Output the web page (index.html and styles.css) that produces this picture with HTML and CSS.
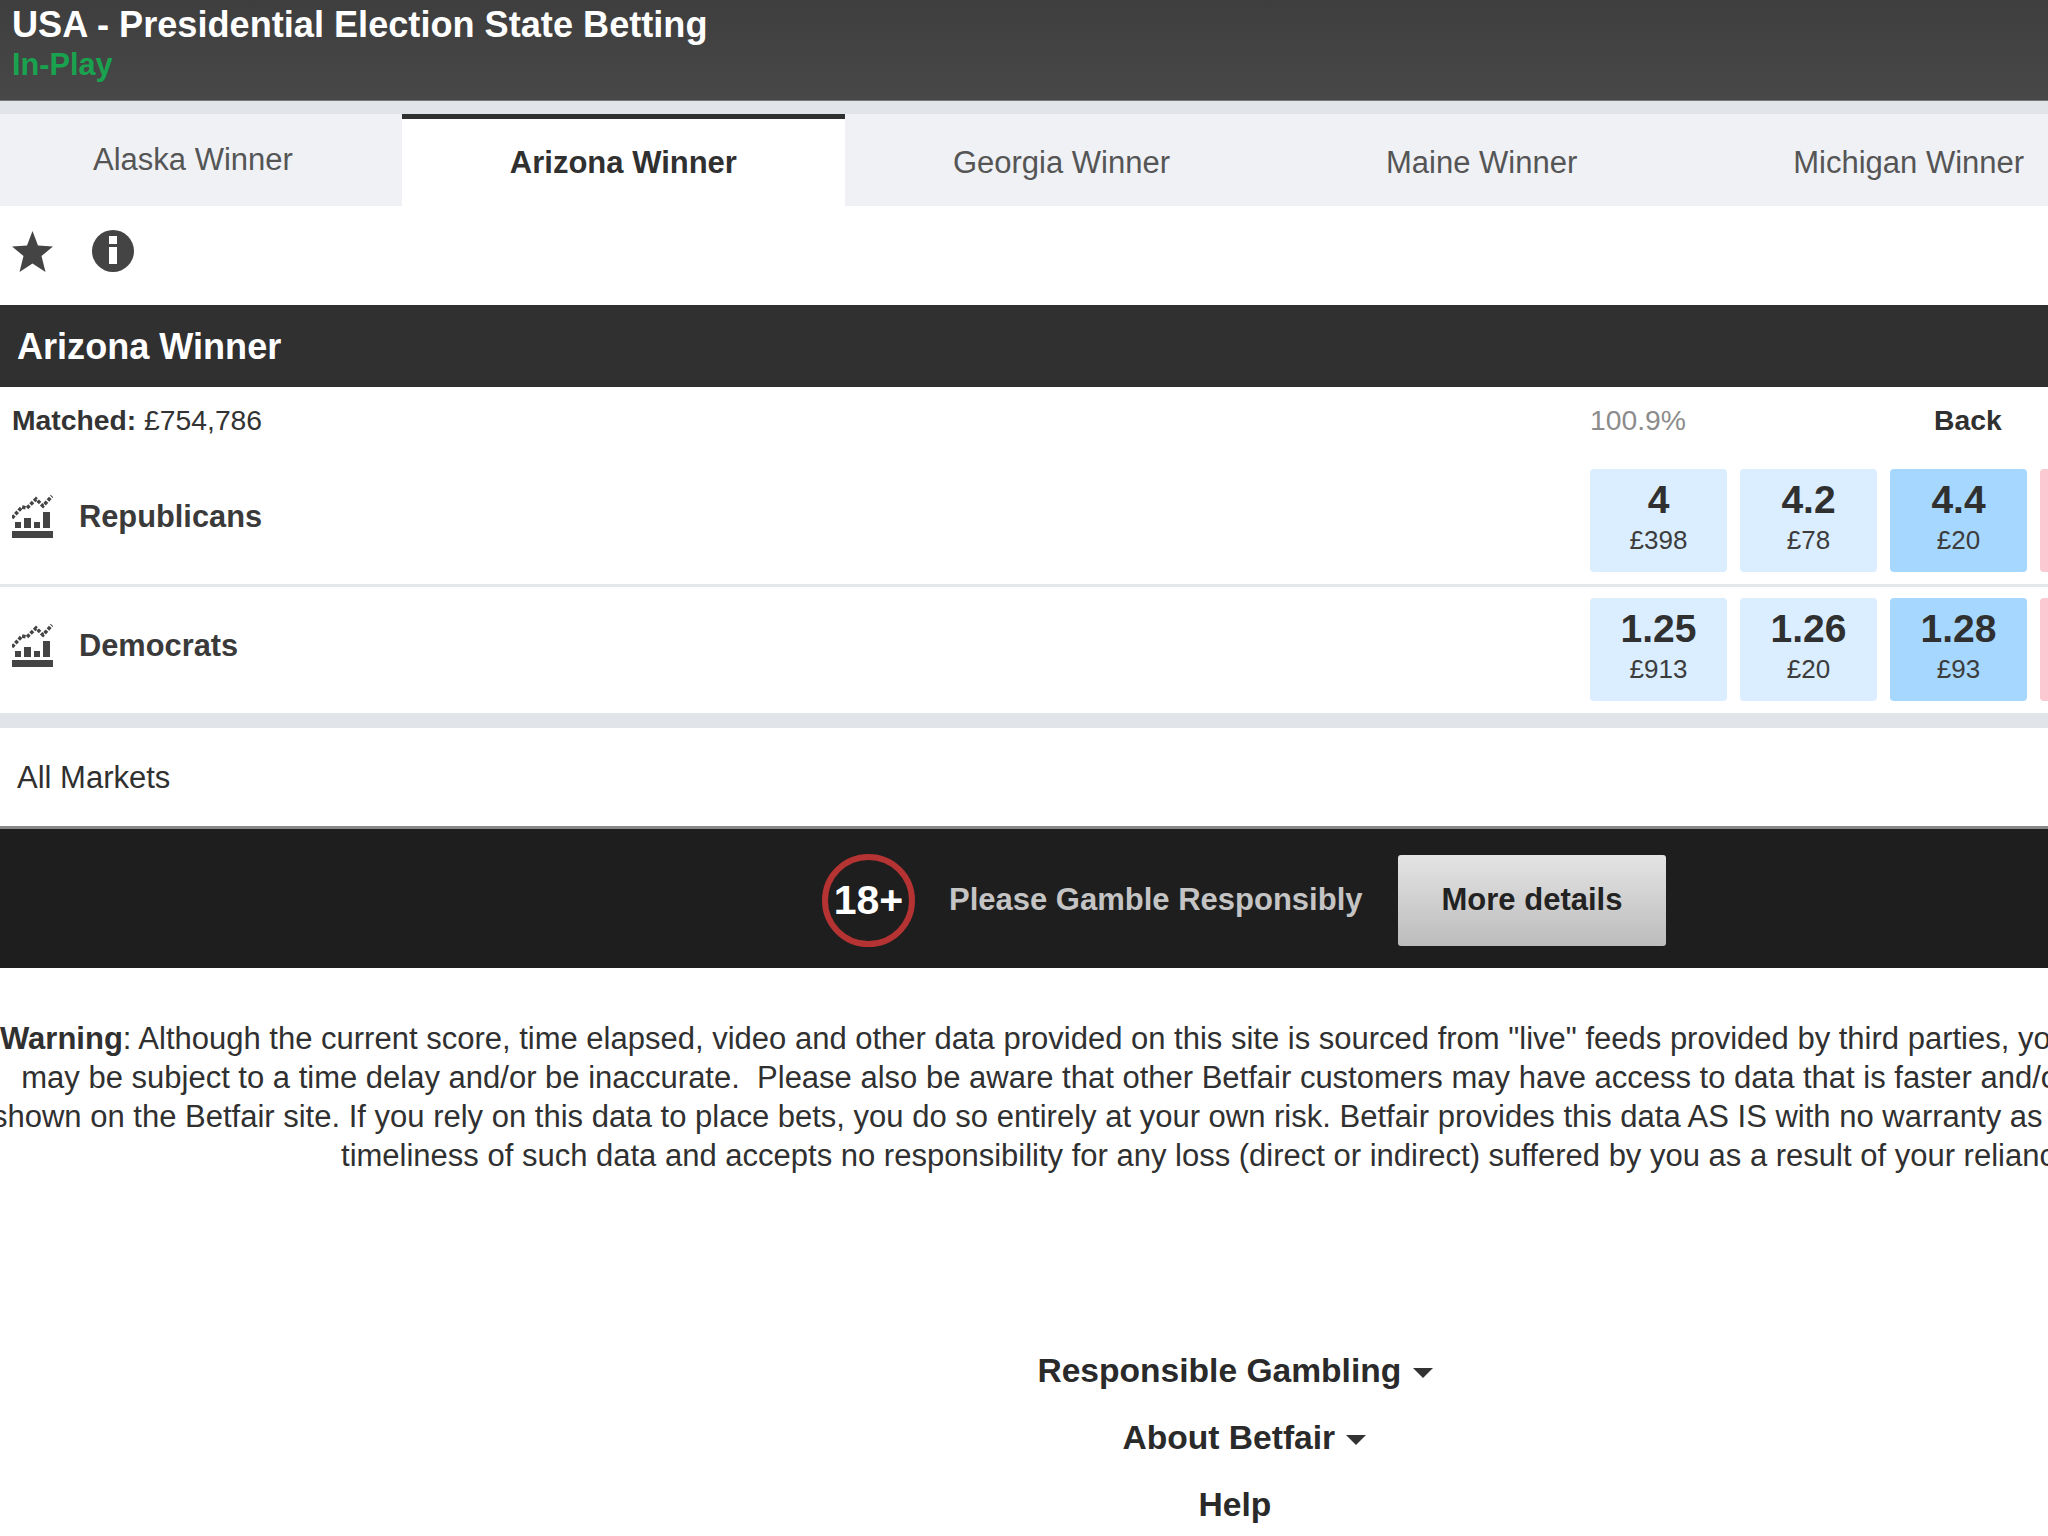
FILE: index.html
```html
<!DOCTYPE html>
<html lang="en">
<head>
<meta charset="utf-8">
<title>Arizona Winner</title>
<link rel="stylesheet" href="styles.css">
</head>
<body>
<div class="page">
  <header class="event-head">
    <div class="event-title">USA - Presidential Election State Betting</div>
    <div class="event-status">In-Play</div>
  </header>
  <nav class="tabs">
    <a class="tab tab-first">Alaska Winner</a>
    <a class="tab tab-active">Arizona Winner</a>
    <a class="tab">Georgia Winner</a>
    <a class="tab">Maine Winner</a>
    <a class="tab">Michigan Winner</a>
  </nav>
  <div class="tools">
    <svg class="icon-star" viewBox="0 0 41 41"><path d="M20.500 0L26 14.500l15 1L29.500 25l4 16-13-8.500-13 8.500 4-16L0 15.500l15-1z"/></svg>
    <svg class="icon-info" viewBox="0 0 42 42"><circle cx="21" cy="21" r="21"/><rect x="17" y="6" width="8" height="8" fill="#fff"/><rect x="17" y="17" width="8" height="17" fill="#fff"/></svg>
  </div>
  <h2 class="market-bar">Arizona Winner</h2>
  <div class="market-info">
    <div class="matched"><b>Matched:</b> £754,786</div>
    <div class="percent">100.9%</div>
    <div class="back-label">Back</div>
  </div>
  <div class="runner runner-line">
    <div class="runner-name">
      <svg class="icon-chart" viewBox="0 0 41 43"><path class="dots" d="M0 23L10 12l5 1 9-9 7 7 9-10"/><path d="M3 27h6v6H3zM12 23h7v10h-7zM22 27h6v6h-6zM31 17h7v16h-7zM0 36h41v7H0z"/></svg>
      <span>Republicans</span>
    </div>
    <div class="prices">
      <div class="price"><b>4</b><span>£398</span></div>
      <div class="price"><b>4.2</b><span>£78</span></div>
      <div class="price price-best"><b>4.4</b><span>£20</span></div>
      <div class="price price-lay"></div>
    </div>
  </div>
  <div class="runner">
    <div class="runner-name">
      <svg class="icon-chart" viewBox="0 0 41 43"><path class="dots" d="M0 23L10 12l5 1 9-9 7 7 9-10"/><path d="M3 27h6v6H3zM12 23h7v10h-7zM22 27h6v6h-6zM31 17h7v16h-7zM0 36h41v7H0z"/></svg>
      <span>Democrats</span>
    </div>
    <div class="prices">
      <div class="price"><b>1.25</b><span>£913</span></div>
      <div class="price"><b>1.26</b><span>£20</span></div>
      <div class="price price-best"><b>1.28</b><span>£93</span></div>
      <div class="price price-lay"></div>
    </div>
  </div>
  <div class="all-markets">All Markets</div>
  <div class="gamble">
    <div class="age">18+</div>
    <div class="gamble-text">Please Gamble Responsibly</div>
    <a class="gamble-btn">More details</a>
  </div>
  <div class="warning">
    <p class="warn-line warn-a"><b>Warning</b>: Although the current score, time elapsed, video and other data provided on this site is sourced from "live" feeds provided by third parties, you should be aware that this data</p>
    <p class="warn-line warn-b">may be subject to a time delay and/or be inaccurate.&nbsp; Please also be aware that other Betfair customers may have access to data that is faster and/or more accurate than the data</p>
    <p class="warn-line warn-c">shown on the Betfair site. If you rely on this data to place bets, you do so entirely at your own risk. Betfair provides this data AS IS with no warranty as to the accuracy, completeness or</p>
    <p class="warn-line warn-d">timeliness of such data and accepts no responsibility for any loss (direct or indirect) suffered by you as a result of your reliance on it.</p>
  </div>
  <ul class="footer-links">
    <li>Responsible Gambling <i class="caret"></i></li>
    <li class="footer-about">About Betfair <i class="caret"></i></li>
    <li>Help</li>
  </ul>
</div>
</body>
</html>
```
FILE: styles.css
```css
html, body { margin: 0; padding: 0; width: 2048px; height: 1536px; overflow: hidden; background: #fff; }
body { font-family: "Liberation Sans", Arial, sans-serif; color: #303030; }
.page { width: 2468px; height: 1536px; overflow: hidden; }
.event-head { height: 101px; box-sizing: border-box; background: linear-gradient(#3e3e3e, #484848); border-bottom: 1px solid #777; padding: 4px 0 0 12px; }
.event-title { font-size: 36.150px; line-height: 42px; font-weight: 700; color: #fff; }
.event-status { font-size: 30.700px; line-height: 38px; font-weight: 700; color: #1aa34f; }
.tabs { display: flex; border-top: 13px solid #e1e5e9; height: 92px; background: #eff1f5; }
.tab { padding: 3px 108px 0; font-size: 31px; line-height: 92px; color: #555; white-space: nowrap; }
.tab-first { padding: 0 109px 0 93px; line-height: 91px; }
.tab-active { background: #fff; border-top: 5px solid #303030; padding-top: 0; font-weight: 700; color: #303030; line-height: 87px; }
.tools { height: 99px; display: flex; align-items: center; padding: 0 0 9px 12px; gap: 39px; box-sizing: border-box; }
.tools svg { fill: #444; display: block; }
.icon-star { width: 41px; height: 41px; }
.icon-info { width: 42px; height: 42px; }
.market-bar { margin: 0; height: 82px; background: #303030; color: #fff; font-size: 36.100px; line-height: 84px; padding-left: 17px; font-weight: 700; }
.market-info { display: flex; height: 82px; font-size: 28.3px; line-height: 66px; }
.matched { width: 1590px; padding-left: 12px; box-sizing: border-box; color: #333; }
.percent { width: 344px; color: #8c8c8c; }
.back-label { font-weight: 700; }
.runner { display: flex; height: 115px; box-sizing: border-box; }
.runner-line { height: 118px; margin-bottom: 11px; border-bottom: 3px solid #e3e8ec; }
.runner-name { width: 1590px; display: flex; align-items: center; height: 94px; padding-left: 12px; box-sizing: border-box; font-size: 30.8px; font-weight: 700; color: #3a3a3a; gap: 26px; }
.runner-name span { padding-top: 2px; }
.icon-chart { width: 41px; height: 43px; fill: #444; flex: none; }
.dots { fill: none; stroke: #444; stroke-width: 3.500; stroke-dasharray: 3.500 1.500; }
.prices { display: flex; gap: 13px; }
.price { width: 137px; height: 103px; border-radius: 4px; background: #dbeeff; display: flex; flex-direction: column; align-items: center; text-align: center; }
.price b { font-size: 39px; line-height: 40px; margin-top: 11px; color: #303030; }
.price span { font-size: 26px; line-height: 32px; margin-top: 4px; color: #3c3c3c; }
.price-best { background: #a6d8ff; }
.price-lay { background: #fac9d1; }
.all-markets { border-top: 15px solid #e1e5e9; height: 98px; line-height: 100px; font-size: 31px; padding-left: 17px; color: #303030; }
.gamble { height: 142px; box-sizing: border-box; background: #1e1e1e; border-top: 3px solid #888; display: flex; align-items: center; padding: 4px 0 0 822px; }
.age { width: 93px; height: 93px; box-sizing: border-box; border: 6px solid #b63333; border-radius: 50%; color: #fff; font-size: 41px; font-weight: 700; line-height: 81px; text-align: center; white-space: nowrap; }
.gamble-text { margin-left: 34px; padding-bottom: 2px; font-size: 31px; font-weight: 700; color: #c4c4c4; width: 449px; white-space: nowrap; }
.gamble-btn { width: 268px; height: 91px; line-height: 89px; text-align: center; border-radius: 3px; background: linear-gradient(#e4e4e4, #bcbcbc); font-size: 31px; font-weight: 700; color: #222; }
.warning { margin: 51px 0 0; text-align: center; font-size: 31px; line-height: 39px; color: #303030; white-space: nowrap; }
.warn-line { margin: 0; }
.warn-a { padding-right: 2px; }
.warn-b { padding-left: 18px; }
.warn-c { margin-left: -8px; text-align: left; }
.warn-d { padding-left: 21px; }
.footer-links { list-style: none; margin: 162px 0 0; padding: 0 0 0 2px; text-align: center; font-size: 33.600px; font-weight: 700; line-height: 67px; color: #2a2a2a; }
.footer-about { padding-left: 19px; }
.caret { display: inline-block; width: 0; height: 0; border-left: 10px solid transparent; border-right: 10px solid transparent; border-top: 10px solid #333; vertical-align: middle; margin-left: 2px; }
```
